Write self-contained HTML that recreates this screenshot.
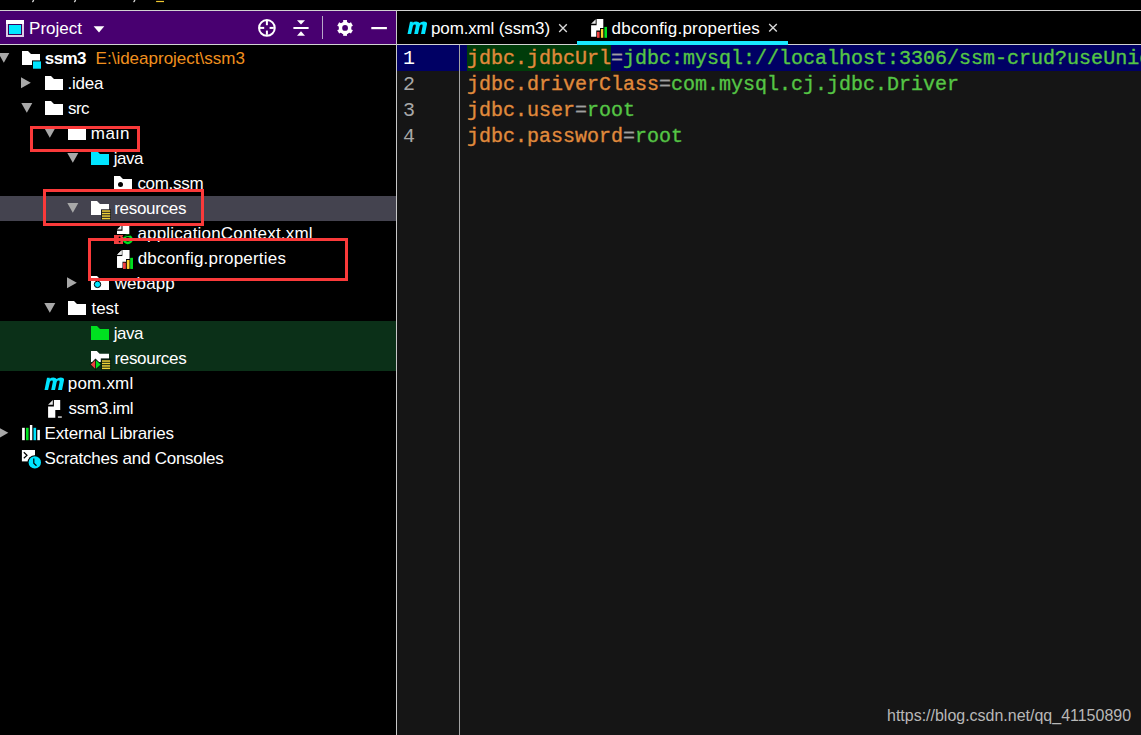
<!DOCTYPE html>
<html><head><meta charset="utf-8">
<style>
*{margin:0;padding:0;box-sizing:border-box}
html,body{width:1141px;height:735px;overflow:hidden;background:#000}
body{position:relative;font-family:"Liberation Sans",sans-serif;color:#fff}
.a{position:absolute}
.t{position:absolute;font-size:17px;line-height:25px;white-space:pre;color:#fff}
.row{position:absolute;left:0;width:396px;height:25px}
.code{position:absolute;font-family:"Liberation Mono",monospace;font-size:20px;line-height:26px;white-space:pre;-webkit-text-stroke:0.35px currentColor}
.k{color:#e08a3c}.e{color:#a0a0a0}.v{color:#55c545}
.ln{position:absolute;font-family:"Liberation Mono",monospace;font-size:20px;line-height:26px;color:#a8a8a8}
.box{position:absolute;border:3px solid #fa3a3a}
svg{position:absolute;overflow:visible}
</style></head><body>

<!-- top strip -->
<div class="a" style="left:0;top:10px;width:1141px;height:1px;background:#d2d2d2"></div>

<!-- project header -->
<div class="a" style="left:0;top:11px;width:396px;height:33px;background:#480070"></div>
<div class="a" style="left:0;top:44px;width:1141px;height:1px;background:#d2d2d2"></div>
<div class="a" style="left:396px;top:10px;width:1px;height:725px;background:#c8c8c8"></div>

<div class="t" style="left:29.1px;top:16px">Project</div>

<!-- tree rows bg -->
<div class="row" style="top:196px;background:#44434f"></div>
<div class="row" style="top:321px;height:50px;background:#0b3018"></div>

<svg class="a" style="left:0;top:0" width="1141" height="735" viewBox="0 0 1141 735">
<defs>
  <path id="fold" d="M0,0 H6 L9,3 H18 V14 H0 Z"/>
</defs>
<!-- top strip glyph fragments -->
<path d="M33.6,-0.5 Q33.6,1.2 32.3,2" fill="none" stroke="#d0d0d0" stroke-width="1.4"/>
<path d="M75.5,-0.5 Q75.5,1.2 74.2,2" fill="none" stroke="#d0d0d0" stroke-width="1.4"/>
<path d="M134.8,-0.5 Q134.8,1.2 133.5,2" fill="none" stroke="#d0d0d0" stroke-width="1.4"/>
<rect x="156.1" y="0.9" width="7.9" height="1.2" fill="#f0c830"/>

<!-- header: project icon -->
<rect x="6" y="20" width="18" height="17" fill="#dccbe4"/>
<rect x="6" y="20" width="18" height="4" fill="#fff"/>
<rect x="8" y="24" width="14" height="11" fill="#3a0060"/>
<rect x="9" y="25" width="12" height="9" fill="#00e8ff"/>
<!-- dropdown -->
<path d="M93.6,26.2 H104.3 L99,32.5 Z" fill="#fff"/>
<!-- crosshair -->
<circle cx="266.9" cy="27.9" r="7.85" fill="none" stroke="#fff" stroke-width="2"/>
<rect x="265.9" y="21" width="2" height="4.2" fill="#fff"/>
<rect x="265.9" y="30.6" width="2" height="4.2" fill="#fff"/>
<rect x="260" y="26.9" width="4.2" height="2" fill="#fff"/>
<rect x="269.6" y="26.9" width="4.2" height="2" fill="#fff"/>
<!-- collapse -->
<rect x="293.4" y="27" width="15.2" height="2" fill="#fff"/>
<path d="M297,20.3 H305 L301,24.5 Z" fill="#fff"/>
<path d="M297,35.8 H305 L301,31.3 Z" fill="#fff"/>
<!-- separator -->
<rect x="322" y="16" width="1" height="23" fill="#b8a8c8"/>
<!-- gear -->
<g transform="translate(345.07,27.93)" fill="#fff">
  <circle r="6.3"/>
  <rect x="-1.9" y="-7.9" width="3.8" height="15.8"/>
  <rect x="-1.9" y="-7.9" width="3.8" height="15.8" transform="rotate(60)"/>
  <rect x="-1.9" y="-7.9" width="3.8" height="15.8" transform="rotate(120)"/>
  <circle r="2.9" fill="#480070"/>
</g>
<!-- minimize -->
<rect x="371.3" y="27" width="15.6" height="2.2" fill="#fff"/>

<!-- tabs -->
<g id="mi"><path fill="#00e5ff" d="M407.5,34 L410,21.7 H412.8 L412.6,22.7 Q414.3,21.5 416.3,21.5 Q418.8,21.5 419.6,23 Q421.3,21.5 423.6,21.5 Q427.5,21.5 427,24.2 L425,34 H421 L422.6,26 Q422.8,24.6 421.8,24.6 Q420.2,24.6 419.7,26 L418,34 H414.2 L415.8,26 Q416,24.6 415,24.6 Q413.4,24.6 412.9,26 L411.1,34 Z"/></g>
<path d="M559.2,24.3 L566.8,31.9 M566.8,24.3 L559.2,31.9" stroke="#d8d8d8" stroke-width="1.4"/>
<path d="M769.2,24 L776.8,31.6 M776.8,24 L769.2,31.6" stroke="#d8d8d8" stroke-width="1.4"/>

<!-- properties icon symbol -->
<g id="prop">
  <path d="M117.1,254.7 L121.7,250.2 V254.7 Z" fill="#e8e8e8"/>
  <path d="M122.6,250 H129.3 V259 H126 V261.6 H122.3 V267.8 H117.1 V256.3 H122.6 Z" fill="#fff"/>
  <rect x="123" y="262.8" width="2.6" height="6" fill="#f04040"/>
  <rect x="126.9" y="260" width="2.4" height="8.8" fill="#f8d030"/>
  <rect x="130.4" y="257.9" width="2.6" height="10.9" fill="#00e020"/>
</g>
<use href="#prop" transform="translate(474,-231)"/>

<!-- tree triangles -->
<g fill="#a8a8a8">
  <path d="M-1.7,53 H9.3 L3.8,62.7 Z"/>
  <path d="M21,77.3 L30.8,82.8 L21,88.3 Z"/>
  <path d="M21.3,103 H32.3 L26.8,112.7 Z"/>
  <path d="M44.3,128 H55.3 L49.8,137.7 Z"/>
  <path d="M67.3,153 H78.3 L72.8,162.7 Z"/>
  <path d="M67.3,203 H78.3 L72.8,212.7 Z"/>
  <path d="M67,277.3 L76.8,282.8 L67,288.3 Z"/>
  <path d="M44.3,303 H55.3 L49.8,312.7 Z"/>
  <path d="M-1.5,427.3 L8.3,432.8 L-1.5,438.3 Z"/>
</g>

<!-- project folder -->
<use href="#fold" x="22" y="51" fill="#fff"/>
<rect x="32" y="60.4" width="10" height="9.3" fill="#000"/>
<rect x="33" y="61.4" width="8" height="7.3" fill="#00e5ff"/>
<use href="#fold" x="45" y="76" fill="#fff"/>
<use href="#fold" x="45" y="101" fill="#fff"/>
<use href="#fold" x="68" y="126" fill="#fff"/>
<use href="#fold" x="91" y="151" fill="#00e5ff"/>
<!-- package -->
<use href="#fold" x="114" y="176" fill="#fff"/>
<circle cx="120.5" cy="184.5" r="2.5" fill="#000"/>
<!-- resources -->
<use href="#fold" x="91" y="201" fill="#fff"/>
<rect x="101" y="209.3" width="10" height="10.5" fill="#1a1a1e"/>
<g fill="#f0d038">
  <rect x="102" y="210.3" width="8.2" height="1.5"/>
  <rect x="102" y="212.8" width="8.2" height="1.5"/>
  <rect x="102" y="215.3" width="8.2" height="1.5"/>
  <rect x="102" y="217.8" width="8.2" height="1.5"/>
</g>
<!-- xml -->
<path d="M117,229.5 L121.5,225 V229.5 Z" fill="#e8e8e8"/>
<path d="M122.5,224.8 H129.3 V234 H117 V230.8 H122.5 Z" fill="#fff"/>
<rect x="114" y="235" width="9" height="9" fill="#f04040"/>
<circle cx="127.8" cy="239.4" r="3.6" fill="none" stroke="#00e020" stroke-width="2.6"/>
<circle cx="119.6" cy="237.5" r="0.9" fill="#000"/>
<circle cx="119.6" cy="241.5" r="0.9" fill="#000"/>
<path d="M122.5,236.5 L130.5,235" stroke="#000" stroke-width="1.2"/>
<!-- properties -->
<use href="#prop"/>
<!-- webapp -->
<use href="#fold" x="91" y="276" fill="#fff"/>
<circle cx="97.5" cy="284.4" r="3.2" fill="#00e5ff" stroke="#000" stroke-width="1"/>
<!-- test -->
<use href="#fold" x="68" y="301" fill="#fff"/>
<use href="#fold" x="91" y="326" fill="#00e020"/>
<!-- test resources -->
<path d="M91,351.1 H96.8 L99.6,353.8 H109 V362 H91 Z" fill="#fff"/>
<rect x="100.8" y="358.4" width="10.4" height="11.8" fill="#061a0c"/>
<path d="M89.6,364.5 L95.5,358.6 L101.6,364.5 L95.5,370.4 Z" fill="#061a0c"/>
<path d="M90.8,364.5 L95.1,360.3 V368.8 Z" fill="#f04040"/>
<path d="M96,360.3 L100.6,364.5 L96,368.8 Z" fill="#00e020"/>
<g fill="#f0d038">
  <rect x="102" y="360.3" width="8.1" height="1.5"/>
  <rect x="102" y="362.7" width="8.1" height="1.5"/>
  <rect x="102" y="365.2" width="8.1" height="1.5"/>
  <rect x="102" y="367.6" width="8.1" height="1.5"/>
</g>
<!-- pom m tree -->
<use href="#mi" transform="translate(-363,356)"/>
<!-- iml -->
<path d="M48.1,404.7 L52.8,400.1 V404.7 Z" fill="#e8e8e8"/>
<path d="M53.9,400.1 H60.2 V409.9 H55.3 V417.7 H48.1 V406.5 H53.9 Z" fill="#fff"/>
<rect x="57.9" y="416.3" width="3.9" height="1.5" fill="#d0d0d0"/>
<!-- libraries -->
<rect x="22.1" y="427.8" width="2.7" height="12.4" fill="#fff"/>
<rect x="26" y="427.8" width="2.6" height="12.4" fill="#00e020"/>
<rect x="29.9" y="425" width="2.4" height="15.2" fill="#fff"/>
<rect x="33.5" y="427.8" width="2.6" height="12.4" fill="#00e5ff"/>
<rect x="37.3" y="429.9" width="2.6" height="10.3" fill="#fff"/>
<!-- scratches -->
<rect x="21.9" y="450" width="13.1" height="11.4" fill="#fff"/>
<path d="M23.8,452.3 L27,455.3 L23.8,458.3" fill="none" stroke="#000" stroke-width="1.2"/>
<circle cx="34.8" cy="462.4" r="7.2" fill="#000"/>
<circle cx="34.8" cy="462.4" r="6.2" fill="#00e5ff"/>
<path d="M33.8,458.5 V463.3 L36.5,465.8" fill="none" stroke="#000" stroke-width="1.2"/>
</svg>

<!-- tree text -->
<div class="t" style="left:44.8px;top:46px;letter-spacing:-0.6px;font-weight:bold">ssm3</div>
<div class="t" style="left:95.6px;top:46px;color:#f0901e">E:\ideaproject\ssm3</div>
<div class="t" style="left:67.5px;top:71px;letter-spacing:-0.2px">.idea</div>
<div class="t" style="left:68px;top:96px;letter-spacing:-0.6px">src</div>
<div class="t" style="left:90.7px;top:121px;letter-spacing:0.6px">main</div>
<div class="t" style="left:113.7px;top:146px;letter-spacing:-0.5px">java</div>
<div class="t" style="left:137.4px;top:171px;letter-spacing:-0.3px">com.ssm</div>
<div class="t" style="left:114.2px;top:196px;letter-spacing:-0.3px">resources</div>
<div class="t" style="left:137.4px;top:221px;letter-spacing:0.2px">applicationContext.xml</div>
<div class="t" style="left:137.7px;top:246px;letter-spacing:0.2px">dbconfig.properties</div>
<div class="t" style="left:114.7px;top:271px;letter-spacing:0.1px">webapp</div>
<div class="t" style="left:91.6px;top:296px;letter-spacing:-0.1px">test</div>
<div class="t" style="left:113.7px;top:321px;letter-spacing:-0.5px">java</div>
<div class="t" style="left:114.4px;top:346px;letter-spacing:-0.3px">resources</div>
<div class="t" style="left:67.8px;top:371px;letter-spacing:0.2px">pom.xml</div>
<div class="t" style="left:68.6px;top:396px;letter-spacing:-0.3px">ssm3.iml</div>
<div class="t" style="left:44.6px;top:421px;letter-spacing:-0.17px">External Libraries</div>
<div class="t" style="left:44.6px;top:446px;letter-spacing:-0.24px">Scratches and Consoles</div>

<!-- editor -->
<div class="a" style="left:397px;top:45px;width:744px;height:690px;background:#151515"></div>
<div class="a" style="left:397px;top:45px;width:744px;height:26px;background:#000064"></div>
<div class="a" style="left:467px;top:45px;width:144px;height:26px;background:#003c0a"></div>
<div class="a" style="left:459px;top:45px;width:1px;height:690px;background:#a4a4a4"></div>

<div class="ln" style="left:403px;top:46px;color:#fff">1</div>
<div class="ln" style="left:403px;top:72px">2</div>
<div class="ln" style="left:403px;top:98px">3</div>
<div class="ln" style="left:403px;top:124px">4</div>

<div class="code" style="left:467px;top:46px"><span class="k">jdbc.jdbcUrl</span><span class="e">=</span><span class="v">jdbc:mysql://localhost:3306/ssm-crud?useUnicode=true</span></div>
<div class="code" style="left:467px;top:72px"><span class="k">jdbc.driverClass</span><span class="e">=</span><span class="v">com.mysql.cj.jdbc.Driver</span></div>
<div class="code" style="left:467px;top:98px"><span class="k">jdbc.user</span><span class="e">=</span><span class="v">root</span></div>
<div class="code" style="left:467px;top:124px"><span class="k">jdbc.password</span><span class="e">=</span><span class="v">root</span></div>

<!-- tabs -->
<div class="t" style="left:431px;top:16px;letter-spacing:-0.14px">pom.xml (ssm3)</div>
<div class="t" style="left:611.6px;top:16px;letter-spacing:0.2px">dbconfig.properties</div>
<div class="a" style="left:577px;top:41px;width:211px;height:4px;background:#18e8ff"></div>

<!-- watermark -->
<div class="a" style="left:887px;top:706px;font-size:17px;line-height:20px;color:#b8b8b8;white-space:pre;transform-origin:0 0;transform:scaleX(0.94)">https://blog.csdn.net/qq_41150890</div>

<!-- red boxes -->
<div class="box" style="left:30px;top:126px;width:110px;height:26px"></div>
<div class="box" style="left:43px;top:189px;width:161px;height:37px"></div>
<div class="box" style="left:88px;top:238px;width:260px;height:43px"></div>

</body></html>
